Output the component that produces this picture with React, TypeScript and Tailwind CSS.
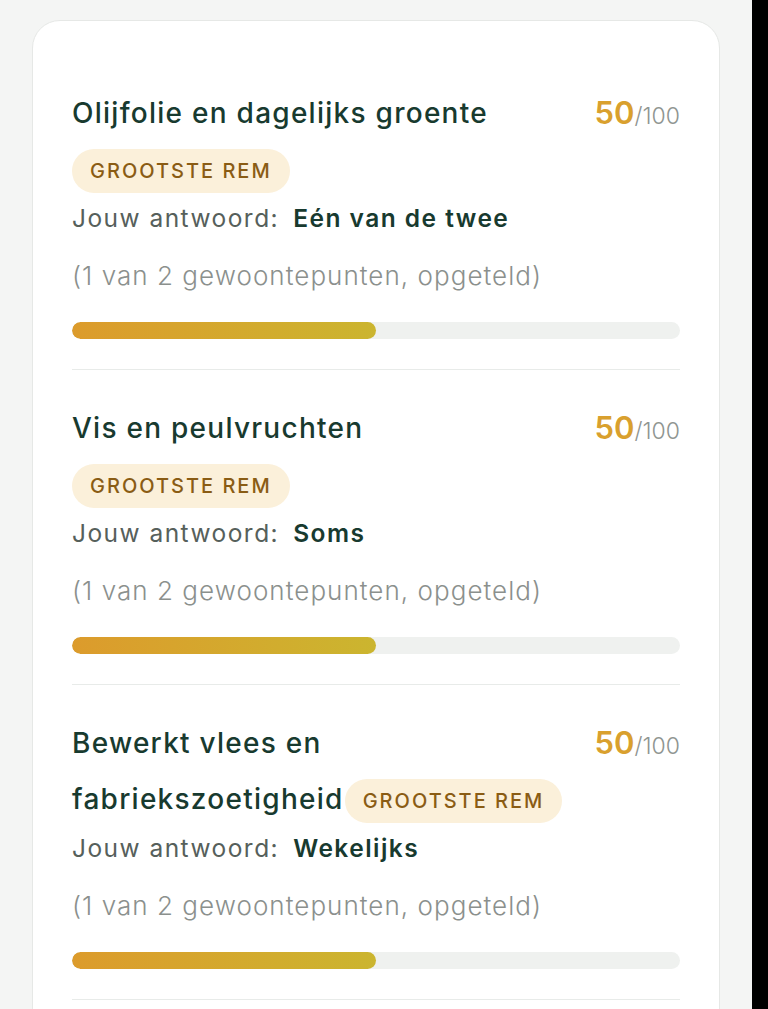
import React from "react";

type Item = { title: string; answer: string };

const items: Item[] = [
  { title: "Olijfolie en dagelijks groente", answer: "Eén van de twee" },
  { title: "Vis en peulvruchten", answer: "Soms" },
  { title: "Bewerkt vlees en fabriekszoetigheid", answer: "Wekelijks" },
];

function Row({ item }: { item: Item }) {
  return (
    <div className="py-[30px] border-b border-[#e8ebe9]">
      <div className="flex items-start justify-between">
        <div className="flex-1 pr-[14px] text-[28px] leading-[56px] font-medium tracking-[0.045em] text-[#183a2f]">
          {item.title}
          <span className="text-[4px] leading-none tracking-normal"> </span>
          <span className="inline-block align-middle h-[44px] leading-[44px] px-[18px] rounded-full bg-[#fbf0da] text-[20px] font-medium tracking-[0.1em] text-[#8a5c14]">
            GROOTSTE REM
          </span>
        </div>
        <div className="leading-[56px] whitespace-nowrap">
          <span className="text-[31px] font-semibold text-[#d9a02e]">50</span>
          <span className="text-[23px] font-light text-[#8f9591]">/100</span>
        </div>
      </div>
      <div className="mt-[3px] text-[24.5px] leading-[36px] tracking-[0.06em]">
        <span className="text-[#56605b]">Jouw antwoord:</span>
        <span className="ml-[14px] font-semibold text-[#183a2f]">{item.answer}</span>
      </div>
      <div className="mt-[20px] text-[26px] leading-[40px] font-light tracking-[0.04em] text-[#8b908d]">
        (1 van 2 gewoontepunten, opgeteld)
      </div>
      <div className="mt-[26px] h-[17px] rounded-full bg-[#eff1ef] overflow-hidden">
        <div
          className="h-full rounded-full bg-gradient-to-r from-[#dc9b2c] to-[#cbb52f]"
          style={{ width: "50%" }}
        />
      </div>
    </div>
  );
}

export default function App() {
  return (
    <div
      className="flex h-[1009px] overflow-hidden bg-[#f4f5f4]"
      style={{ fontFamily: "Inter, 'Noto Sans', sans-serif" }}
    >
      <div className="flex-1 px-8 pt-5">
        <div className="bg-white border border-[#e6e8e6] rounded-[28px] px-[39px] pt-[34px] min-h-[1100px]">
          {items.map((it) => (
            <Row key={it.title} item={it} />
          ))}
        </div>
      </div>
      <div className="w-4 bg-black" />
    </div>
  );
}
